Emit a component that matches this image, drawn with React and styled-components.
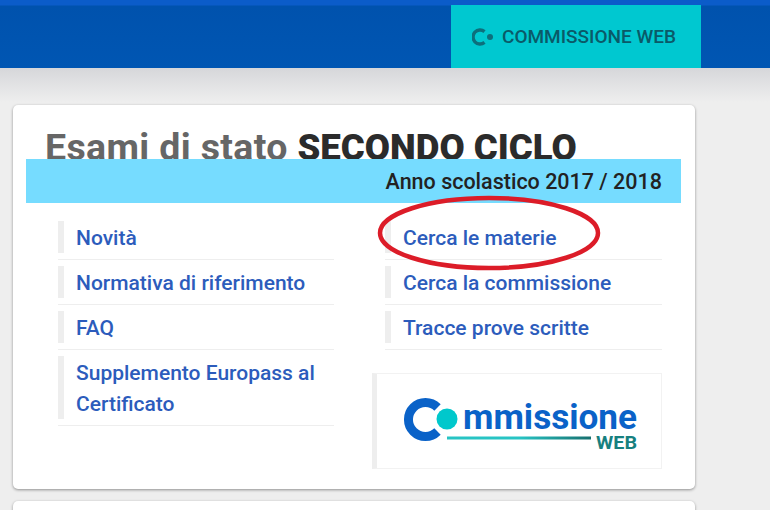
import React from "react";
import styled, { createGlobalStyle } from "styled-components";

const Global = createGlobalStyle`
  html, body {
    margin: 0;
    height: 510px;
    overflow: hidden;
    background: #eeeeee;
    font-family: "Roboto", "Liberation Sans", sans-serif;
  }
`;

const Header = styled.header`
  height: 68px;
  box-sizing: border-box;
  padding: 5px 69px 0 451px;
  background: linear-gradient(#0b5cc9 0, #0b5cc9 5px, #0052ad 6px, #0056b3 100%);
`;

const HeaderTab = styled.div`
  height: 63px;
  width: 250px;
  box-sizing: border-box;
  padding-left: 21px;
  display: flex;
  align-items: center;
  gap: 7px;
  background: #00c8d0;
  color: #0a5a68;
  font-size: 19px;
  font-weight: 500;
  white-space: nowrap;
`;

const Main = styled.main`
  height: 442px;
  box-sizing: border-box;
  overflow: hidden;
  padding: 37px 75px 0 13px;
  background: linear-gradient(#d6d7da 0, #eeeeee 34px);
  display: flex;
  flex-direction: column;
  gap: 12px;
`;

const Card = styled.section`
  position: relative;
  background: #fff;
  border-radius: 5px;
  box-shadow: 0 1px 3px rgba(0, 0, 0, 0.4);
  height: ${(p) => p.$height}px;
  flex: none;
  box-sizing: border-box;
  padding: 21px 14px 0 13px;
`;

const Title = styled.h1`
  margin: 0 0 0 19px;
  height: 33px;
  font-size: 37.5px;
  line-height: 43px;
  font-weight: 700;
  letter-spacing: 0.35px;
  color: #666;
  white-space: nowrap;
  b {
    color: #2b2b2b;
    font-size: 36.6px;
    letter-spacing: 0;
  }
`;

const YearBand = styled.div`
  height: 44px;
  background: #76dcff;
  display: flex;
  align-items: center;
  justify-content: flex-end;
  padding-right: 19px;
  font-size: 21.5px;
  font-weight: 500;
  color: #222;
  position: relative;
`;

const Columns = styled.div`
  display: grid;
  grid-template-columns: 276px 277px;
  column-gap: 51px;
  margin: 18px 0 0 32px;
`;

const Column = styled.div`
  display: flex;
  flex-direction: column;
`;

const Item = styled.a`
  display: block;
  border-bottom: 1px solid #eeeeee;
  padding-bottom: 6px;
  margin-bottom: 6px;
  color: #2c5cbc;
  font-size: 21px;
  font-weight: 500;
  line-height: 31px;
`;

const ItemBar = styled.div`
  display: flex;
  border-left: 6px solid #eeeeee;
  padding-left: 12px;
`;

const ItemLabel = styled.span`
  padding-top: 2px;
  margin-bottom: -1px;
`;

const LogoBox = styled.div`
  margin: 17px 0 0 -13px;
  width: 290px;
  height: 96px;
  box-sizing: border-box;
  border: 1px solid #f2f2f2;
  border-left: 5px solid #eeeeee;
  padding: 22px 0 0 23px;
`;

const LogoMark = styled.svg`
  display: block;
`;

const LogoWord = styled.text`
  font-family: "Roboto", sans-serif;
  font-weight: 700;
`;

const Ring = styled.svg`
  position: absolute;
  left: 364px;
  top: 90px;
`;

const leftLinks = ["Novità", "Normativa di riferimento", "FAQ", "Supplemento Europass al Certificato"];
const rightLinks = ["Cerca le materie", "Cerca la commissione", "Tracce prove scritte"];

function LinkItem({ text }) {
  return (
    <Item>
      <ItemBar>
        <ItemLabel>{text}</ItemLabel>
      </ItemBar>
    </Item>
  );
}

export default function App() {
  return (
    <>
      <Global />
      <Header>
        <HeaderTab>
          <svg width="23" height="18" viewBox="0 0 23 18">
            <path d="M12.5 3.6 A7 7 0 1 0 12.5 14.4" fill="none" stroke="#0d6f7c" strokeWidth="3.4" />
            <circle cx="18" cy="9" r="3" fill="#0d6f7c" />
          </svg>
          COMMISSIONE WEB
        </HeaderTab>
      </Header>
      <Main>
        <Card $height={384}>
          <Title>
            Esami di stato <b>SECONDO CICLO</b>
          </Title>
          <YearBand>Anno scolastico 2017 / 2018</YearBand>
          <Columns>
            <Column>
              {leftLinks.map((t) => (
                <LinkItem key={t} text={t} />
              ))}
            </Column>
            <Column>
              {rightLinks.map((t) => (
                <LinkItem key={t} text={t} />
              ))}
              <LogoBox>
                <LogoMark width="240" height="60" viewBox="0 0 240 60">
                  <defs>
                    <linearGradient id="logoLine">
                      <stop offset="0.5" stopColor="#27c4c4" />
                      <stop offset="1" stopColor="#17706f" />
                    </linearGradient>
                  </defs>
                  <path d="M37.5 11.5 A17 17 0 1 0 37.5 35.5" fill="none" stroke="#0a62c8" strokeWidth="9" />
                  <circle cx="47" cy="23" r="10.5" fill="#00c8cc" />
                  <LogoWord x="63" y="33" fontSize="35" fill="#0a62c8" textLength="174" lengthAdjust="spacingAndGlyphs">
                    mmissione
                  </LogoWord>
                  <rect x="47" y="40.5" width="144" height="3" fill="url(#logoLine)" />
                  <LogoWord x="196" y="53" fontSize="19" fill="#17807f" textLength="41" lengthAdjust="spacingAndGlyphs">
                    WEB
                  </LogoWord>
                </LogoMark>
              </LogoBox>
            </Column>
          </Columns>
          <Ring width="224" height="76" viewBox="0 0 224 76">
            <ellipse cx="112" cy="38" rx="109" ry="35" fill="none" stroke="#dc1c28" strokeWidth="4.5" />
          </Ring>
        </Card>
        <Card $height={40} />
      </Main>
    </>
  );
}
